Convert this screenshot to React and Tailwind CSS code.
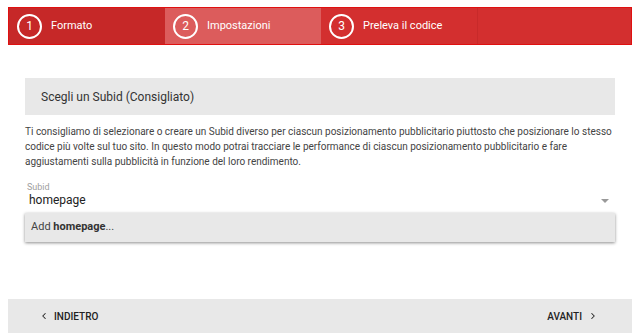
import { ChevronLeft, ChevronRight } from "lucide-react";

const steps = [
  { n: 1, label: "Formato", bg: "bg-[#c62828]" },
  { n: 2, label: "Impostazioni", bg: "bg-[#dc5c5c]" },
  { n: 3, label: "Preleva il codice", bg: "bg-[#d32f2f]" },
];

export default function App() {
  return (
    <div className="h-[336px] w-[640px] bg-white font-['Roboto',sans-serif] text-[#333]">
      <div className="px-2 pt-[7px]">
        <div className="flex h-[38px] border border-[#e01010] bg-[#d32f2f]">
          {steps.map((s) => (
            <div key={s.n} className={`flex w-[156px] items-center gap-[9px] pl-2 ${s.bg}`}>
              <div className="flex h-[25px] w-[25px] items-center justify-center rounded-full border-2 border-white text-[12px] text-white">
                {s.n}
              </div>
              <span className="text-[11px] text-white">{s.label}</span>
            </div>
          ))}
          <div className="flex-1 border-l border-[#c82a2a]" />
        </div>
      </div>

      <div className="px-[25px] pt-[33px]">
        <div className="flex h-[37px] items-center bg-[#e8e8e8] pl-4 text-[12px] text-[#333]">
          Scegli un Subid (Consigliato)
        </div>
        <p className="mt-[9px] whitespace-nowrap text-[10px] leading-[15px] text-[#444]">
          Ti consigliamo di selezionare o creare un Subid diverso per ciascun posizionamento pubblicitario piuttosto che posizionare lo stesso
          <br />
          codice più volte sul tuo sito. In questo modo potrai tracciare le performance di ciascun posizionamento pubblicitario e fare
          <br />
          aggiustamenti sulla pubblicità in funzione del loro rendimento.
        </p>

        <div className="mt-[13px]">
          <div className="pl-[2px] text-[9px] leading-[10px] text-[#9e9e9e]">Subid</div>
          <div className="flex items-center justify-between pl-[4px] pr-[6px]">
            <span className="text-[12px] leading-[17px] text-[#222]">homepage</span>
            <span className="h-0 w-0 border-x-[4px] border-t-[4px] border-x-transparent border-t-[#999]" />
          </div>
          <div className="mt-[4px] flex h-[29px] items-center bg-[#e8e8e8] pl-[6px] text-[11px] text-[#444] shadow-[0_1px_3px_rgba(0,0,0,0.45)]">
            Add&nbsp;<b className="font-bold text-[#333]">homepage</b>...
          </div>
        </div>
      </div>

      <div className="mt-[57px] px-2">
        <div className="flex h-[34px] items-center justify-between bg-[#e8e8e8] pl-[31px] pr-[34px] text-[10px] font-medium text-[#222]">
          <div className="flex items-center gap-[5px]">
            <ChevronLeft size={10} strokeWidth={2.5} />
            INDIETRO
          </div>
          <div className="flex items-center gap-[6px]">
            AVANTI
            <ChevronRight size={10} strokeWidth={2.5} />
          </div>
        </div>
      </div>
    </div>
  );
}
